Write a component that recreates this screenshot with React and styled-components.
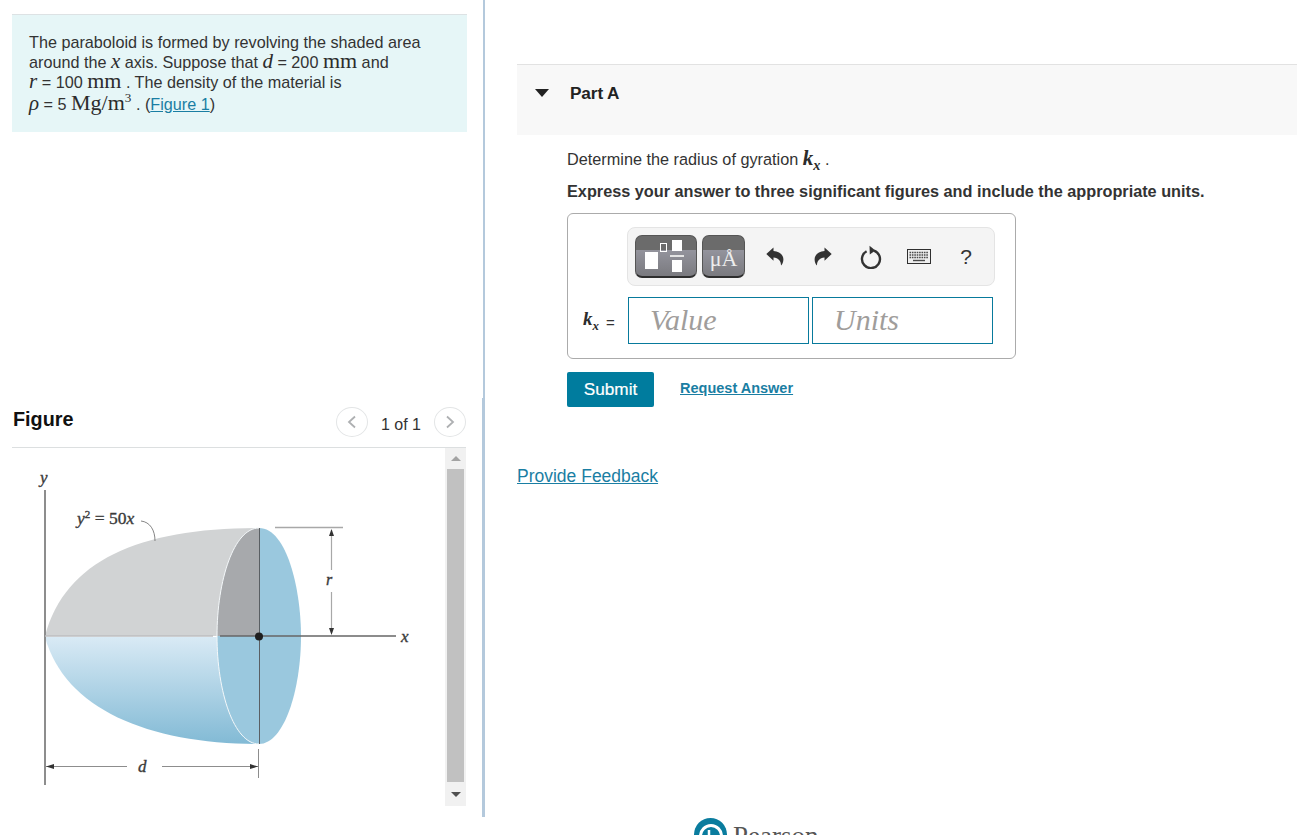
import React from 'react'
import styled, { createGlobalStyle } from 'styled-components'

const GlobalStyle = createGlobalStyle`
    html, body {
        margin: 0;
        height: 100%;
        overflow: hidden;
        background: #fff;
        font-family: "Liberation Sans", Arial, sans-serif;
        color: #333;
    }
`

const Page = styled.div`
    width: 1297px;
    height: 835px;
    overflow: hidden;
`

const Main = styled.div`
    display: flex;
    height: 817px;
`

const LeftColumn = styled.div`
    flex: 0 0 485px;
    display: flex;
    flex-direction: column;
`

const IntroSection = styled.section`
    box-sizing: border-box;
    height: 398px;
    padding: 14px 16px 0 12px;
    border-right: 2px solid #b4c9dc;
`

const Intro = styled.div`
    box-sizing: border-box;
    height: 118px;
    padding: 17px 17px 0;
    background: #e6f6f7;
    border-top: 1px solid #dde2e4;
    font-size: 16.2px;
    line-height: 20px;
`

const IntroLine = styled.div`
    height: 20px;
    margin-top: ${(p) => p.$gap || 0}px;
    white-space: nowrap;
`

const Serif = styled.span`
    font-family: "Liberation Serif", "Times New Roman", serif;
    font-size: ${(p) => p.$size || 21}px;
    font-style: ${(p) => (p.$italic ? 'italic' : 'normal')};
    font-weight: ${(p) => (p.$bold ? 700 : 400)};
    line-height: 0;
    color: #2c2c2c;

    sub {
        font-size: 68%;
        line-height: 0;
    }

    sup {
        font-size: 60%;
        line-height: 0;
    }
`

const Link = styled.a`
    color: #1a7ea3;
    text-decoration: underline;
`

const FigureSection = styled.section`
    box-sizing: border-box;
    flex: 1;
    padding: 0 16px 0 12px;
    border-right: 3px solid #b4c9dc;
`

const FigureHeader = styled.header`
    box-sizing: border-box;
    height: 50px;
    display: flex;
    justify-content: space-between;
    align-items: flex-start;
    border-bottom: 1px solid #dcdfe0;
`

const FigureTitle = styled.h2`
    margin: 9px 0 0 1px;
    font-size: 19.8px;
    line-height: 24px;
    font-weight: 700;
    color: #111;
`

const Pager = styled.div`
    display: flex;
    align-items: center;
    gap: 13px;
    margin-top: 9px;
    font-size: 16px;
`

const PagerCount = styled.span`
    padding-top: 5px;
`

const PagerButton = styled.button`
    box-sizing: border-box;
    width: 32px;
    height: 30px;
    padding: 0;
    display: flex;
    align-items: center;
    justify-content: center;
    background: #fff;
    border: 1px solid #e3e5e6;
    border-radius: 50%;
`

const FigureBody = styled.div`
    display: flex;
    height: 358px;
`

const Drawing = styled.svg`
    flex: 1;
    display: block;
`

const ScrollTrack = styled.div`
    flex: 0 0 21px;
    display: flex;
    flex-direction: column;
    align-items: center;
    background: #f1f1f1;
`

const ScrollEnd = styled.div`
    flex: 0 0 ${(p) => p.$height}px;
    display: flex;
    align-items: center;
    justify-content: center;
`

const ScrollThumb = styled.div`
    flex: 1;
    width: 17px;
    background: #c1c1c1;
`

const Arrow = styled.span`
    width: 0;
    height: 0;
    border-left: 5px solid transparent;
    border-right: 5px solid transparent;
    border-${(p) => (p.$up ? 'bottom' : 'top')}: 5px solid ${(p) => (p.$up ? '#a3a3a3' : '#505050')};
`

const RightColumn = styled.div`
    flex: 1;
    padding: 64px 0 0 32px;
`

const PartHeader = styled.header`
    box-sizing: border-box;
    height: 71px;
    padding: 18px 0 0 18px;
    display: flex;
    align-items: flex-start;
    background: #f8f8f8;
    border-top: 1px solid #e2e2e2;
`

const Caret = styled.span`
    width: 0;
    height: 0;
    margin-top: 6px;
    border-left: 7px solid transparent;
    border-right: 7px solid transparent;
    border-top: 8px solid #222;
`

const PartTitle = styled.h3`
    margin: 0 0 0 21px;
    font-size: 17.2px;
    line-height: 20px;
    font-weight: 700;
    color: #222;
    letter-spacing: -0.1px;
`

const PartBody = styled.div`
    padding: 14px 0 0 50px;
`

const Question = styled.p`
    margin: 0;
    font-size: 16.25px;
    line-height: 20px;
`

const Instruction = styled.p`
    margin: 12px 0 12px;
    font-size: 16.25px;
    line-height: 20px;
    font-weight: 700;
`

const AnswerBox = styled.div`
    box-sizing: border-box;
    width: 449px;
    height: 146px;
    padding-top: 13px;
    border: 1px solid #ababab;
    border-radius: 6px;
`

const Toolbar = styled.div`
    box-sizing: border-box;
    width: 368px;
    height: 59px;
    margin-left: 59px;
    padding: 7px;
    display: flex;
    gap: 5px;
    background: #f4f4f4;
    border: 1px solid #e4e4e4;
    border-radius: 8px;
`

const TemplateButton = styled.button`
    box-sizing: border-box;
    flex: 0 0 ${(p) => p.$width}px;
    height: 43px;
    padding: 0;
    position: relative;
    background: linear-gradient(#6b6b6b 0, #6b6b6b 36%, #93939c 36%, #7a7a7f 100%);
    border: 1px solid #555;
    border-bottom: 2px solid #2e2e2e;
    border-radius: 7px;
    font-family: "Liberation Serif", serif;
    font-size: 22px;
    line-height: 46px;
    color: #ededed;
    overflow: hidden;
`

const ToolIcons = styled.div`
    display: flex;
    margin-left: 1px;
`

const ToolIcon = styled.span`
    flex: 0 0 ${(p) => p.$width || 48}px;
    height: 43px;
    display: flex;
    align-items: center;
    justify-content: center;
    font-size: 21px;
    color: #333;
`

const InputRow = styled.div`
    display: flex;
    align-items: center;
    gap: 3px;
    margin-top: 11px;
    padding-left: 15px;
`

const InputLabel = styled.label`
    flex: 0 0 42px;
    display: flex;
    align-items: center;
    gap: 7px;
    padding-top: 3px;
    font-size: 15px;
`

const AnswerInput = styled.input`
    box-sizing: border-box;
    width: 181px;
    height: 47px;
    padding: 0 0 2px 21px;
    border: 1px solid #087a9c;
    border-radius: 0;
    outline: none;
    font-family: "Liberation Serif", serif;
    font-style: italic;
    font-size: 30px;

    &::placeholder {
        color: #a09d9b;
        opacity: 1;
    }
`

const ActionRow = styled.div`
    display: flex;
    align-items: center;
    gap: 26px;
    margin-top: 13px;
`

const SubmitButton = styled.button`
    width: 87px;
    height: 35px;
    padding: 0;
    background: #007c9e;
    border: none;
    border-radius: 2px;
    font-family: inherit;
    font-size: 17.2px;
    color: #fff;
    -webkit-text-stroke: 0.2px #fff;
`

const RequestLink = styled(Link)`
    margin-top: -3px;
    font-size: 14.5px;
    font-weight: 700;
`

const Feedback = styled(Link)`
    display: block;
    margin-top: 59px;
    font-size: 17.5px;
    line-height: 20px;
    width: max-content;
`

const Footer = styled.footer`
    display: flex;
    gap: 6px;
    padding: 1px 0 0 694px;
`

const Wordmark = styled.span`
    margin-top: 3px;
    font-family: "Liberation Serif", serif;
    font-size: 27px;
    line-height: 30px;
    color: #555;
`

const figureText = {
    fontFamily: '"Liberation Serif", serif',
    fontStyle: 'italic',
    fill: '#3a3a3a',
    stroke: '#3a3a3a',
    strokeWidth: 0.35,
}

const ParaboloidFigure = () => (
    <Drawing viewBox="12 448 433 358" width="433" height="358">
        <defs>
            <linearGradient id="bowl" x1="0" y1="0" x2="0" y2="1">
                <stop offset="0" stopColor="#d9eaf5" />
                <stop offset="1" stopColor="#82bad5" />
            </linearGradient>
        </defs>
        <path d="M45 636 C65 560 140 528 259 528 L259 636 Z" fill="#d1d3d4" />
        <path d="M45 637 C65 710 150 744 259 744 L259 637 Z" fill="url(#bowl)" />
        <path d="M259 528 C234 528 217 580 217 636 L259 636 Z" fill="#a7a9ac" />
        <path d="M217 636 C217 692 234 744 259 744 L259 636 Z" fill="#9ac8de" />
        <path d="M259 528 C287 528 301 590 301 636 C301 690 284 744 259 744 Z" fill="#9ac8de" />
        <path d="M259 528 C234 528 217 580 217 636 C217 692 234 744 259 744" fill="none" stroke="#f4f8fa" strokeWidth="1" />
        <path d="M45 490 V785" stroke="#8d8d8d" strokeWidth="2" fill="none" />
        <path d="M45 636 H213" stroke="#bcbec0" strokeWidth="1.5" fill="none" />
        <path d="M220 636 H396" stroke="#666" strokeWidth="1.5" fill="none" />
        <path d="M259.5 528 V744" stroke="#5a5f63" strokeWidth="1" fill="none" />
        <circle cx="259" cy="636.5" r="4" fill="#1f1f1f" />
        <path d="M275 527.5 H343" stroke="#a8a8a8" strokeWidth="1.5" fill="none" />
        <path d="M331.5 530 V570 M331.5 592 V633" stroke="#a8a8a8" strokeWidth="1.2" fill="none" />
        <path d="M331.5 529 l-2.5 7 h5 Z M331.5 635 l-2.5 -7 h5 Z" fill="#333" />
        <path d="M45 766.5 H127 M162 766.5 H258" stroke="#8d8d8d" strokeWidth="1.2" fill="none" />
        <path d="M46 766.5 l8 -2.5 v5 Z M258 766.5 l-8 -2.5 v5 Z" fill="#333" />
        <path d="M258.5 749 V778" stroke="#8d8d8d" strokeWidth="1" fill="none" />
        <path d="M141 521 C150 522 155 530 155 541" stroke="#777" strokeWidth="0.9" fill="none" />
        <text x="40" y="483" fontSize="17" style={figureText}>y</text>
        <text x="401" y="642" fontSize="17" style={figureText}>x</text>
        <text x="326" y="585" fontSize="16" style={figureText}>r</text>
        <text x="138" y="772" fontSize="17" style={figureText}>d</text>
        <text x="77" y="524" fontSize="17.5" letterSpacing="0" style={figureText}>
            y<tspan fontSize="11" dy="-6" fontStyle="normal">2</tspan>
            <tspan dy="6" fontStyle="normal">{'\u00a0=\u00a050'}</tspan>x
        </text>
    </Drawing>
)

const Chevron = ({ right }) => (
    <svg width="10" height="14" viewBox="0 0 10 14" fill="none">
        <path d={right ? 'M2 1.5 L8 7 L2 12.5' : 'M8 1.5 L2 7 L8 12.5'} stroke="#aeb0b2" strokeWidth="1.8" />
    </svg>
)

const UndoIcon = ({ flip }) => (
    <svg width="18" height="19" viewBox="0 0 18 19" style={flip ? { transform: 'scaleX(-1)' } : undefined}>
        <path
            d="M0.3 7 L7.5 0.5 V4 C13 4.2 17.4 7.5 17.4 12.4 C17.4 14.8 16.4 17 15 18.6 C15.2 14.4 12.6 10.6 7.5 10.4 V13.8 Z"
            fill="#333"
        />
    </svg>
)

const ResetIcon = () => (
    <svg width="22" height="24" viewBox="0 0 22 24" fill="none">
        <path d="M6.6 6.2 A9 9 0 1 0 14 5.6" stroke="#333" strokeWidth="2.4" />
        <path d="M9.5 0.8 L15.4 5.4 L9.8 9.4 Z" fill="#333" />
    </svg>
)

const KeyboardIcon = () => (
    <svg width="24" height="15" viewBox="0 0 24 15" fill="none">
        <rect x="0.5" y="0.5" width="23" height="14" fill="#efefef" stroke="#2f2f2f" />
        <path d="M2.5 3.5 H21.5 M2.5 6 H21.5 M2.5 8.5 H21.5" stroke="#4a4a4a" strokeWidth="1.3" strokeDasharray="1.6 0.8" />
        <path d="M6 11.5 H18" stroke="#4a4a4a" strokeWidth="1.4" />
    </svg>
)

const FractionIcon = () => (
    <svg width="60" height="40" viewBox="636 236 60 40" style={{ position: 'absolute', left: 0, top: 0 }}>
        <rect x="645" y="252" width="13" height="17" fill="#fff" />
        <rect x="660.5" y="243.5" width="6" height="8" fill="none" stroke="#fff" />
        <rect x="672" y="240" width="10" height="11" fill="#fff" />
        <rect x="670" y="255" width="14" height="2" fill="#e4e4e4" />
        <rect x="672" y="260" width="10" height="12" fill="#fff" />
    </svg>
)

const PearsonLogo = () => (
    <svg width="33" height="33" viewBox="0 0 33 33" fill="none">
        <circle cx="16.5" cy="16.5" r="16.5" fill="#0a7c9e" />
        <circle cx="17" cy="18" r="10.5" stroke="#fff" strokeWidth="3" />
        <path d="M15 12 V20" stroke="#fff" strokeWidth="2.5" />
    </svg>
)

const App = () => (
    <Page>
        <GlobalStyle />
        <Main>
            <LeftColumn>
                <IntroSection>
                    <Intro>
                        <IntroLine>The paraboloid is formed by revolving the shaded area</IntroLine>
                        <IntroLine>around the <Serif $italic>x</Serif> axis. Suppose that <Serif $italic>d</Serif> = 200 <Serif $size={22}>mm</Serif> and</IntroLine>
                        <IntroLine><Serif $italic>r</Serif> = 100 <Serif $size={22}>mm</Serif> . The density of the material is</IntroLine>
                        <IntroLine $gap={2}>
                            <Serif $italic>ρ</Serif> = 5 <Serif $size={22}>Mg/m<sup>3</sup></Serif> . (<Link href="#">Figure 1</Link>)
                        </IntroLine>
                    </Intro>
                </IntroSection>
                <FigureSection>
                    <FigureHeader>
                        <FigureTitle>Figure</FigureTitle>
                        <Pager>
                            <PagerButton aria-label="Previous"><Chevron /></PagerButton>
                            <PagerCount>1 of 1</PagerCount>
                            <PagerButton aria-label="Next"><Chevron right /></PagerButton>
                        </Pager>
                    </FigureHeader>
                    <FigureBody>
                        <ParaboloidFigure />
                        <ScrollTrack>
                            <ScrollEnd $height={21}><Arrow $up /></ScrollEnd>
                            <ScrollThumb />
                            <ScrollEnd $height={24}><Arrow /></ScrollEnd>
                        </ScrollTrack>
                    </FigureBody>
                </FigureSection>
            </LeftColumn>
            <RightColumn>
                <PartHeader>
                    <Caret />
                    <PartTitle>Part A</PartTitle>
                </PartHeader>
                <PartBody>
                    <Question>
                        Determine the radius of gyration <Serif $italic $bold>k<sub>x</sub></Serif> .
                    </Question>
                    <Instruction>Express your answer to three significant figures and include the appropriate units.</Instruction>
                    <AnswerBox>
                        <Toolbar>
                            <TemplateButton $width={62} aria-label="Templates"><FractionIcon /></TemplateButton>
                            <TemplateButton $width={43}>μÅ</TemplateButton>
                            <ToolIcons>
                                <ToolIcon><UndoIcon /></ToolIcon>
                                <ToolIcon><UndoIcon flip /></ToolIcon>
                                <ToolIcon><ResetIcon /></ToolIcon>
                                <ToolIcon><KeyboardIcon /></ToolIcon>
                                <ToolIcon $width={46}>?</ToolIcon>
                            </ToolIcons>
                        </Toolbar>
                        <InputRow>
                            <InputLabel><Serif $italic $bold $size={19}>k<sub>x</sub></Serif> =</InputLabel>
                            <AnswerInput placeholder="Value" />
                            <AnswerInput placeholder="Units" />
                        </InputRow>
                    </AnswerBox>
                    <ActionRow>
                        <SubmitButton>Submit</SubmitButton>
                        <RequestLink href="#">Request Answer</RequestLink>
                    </ActionRow>
                </PartBody>
                <Feedback href="#">Provide Feedback</Feedback>
            </RightColumn>
        </Main>
        <Footer>
            <PearsonLogo />
            <Wordmark>Pearson</Wordmark>
        </Footer>
    </Page>
)

export default App
